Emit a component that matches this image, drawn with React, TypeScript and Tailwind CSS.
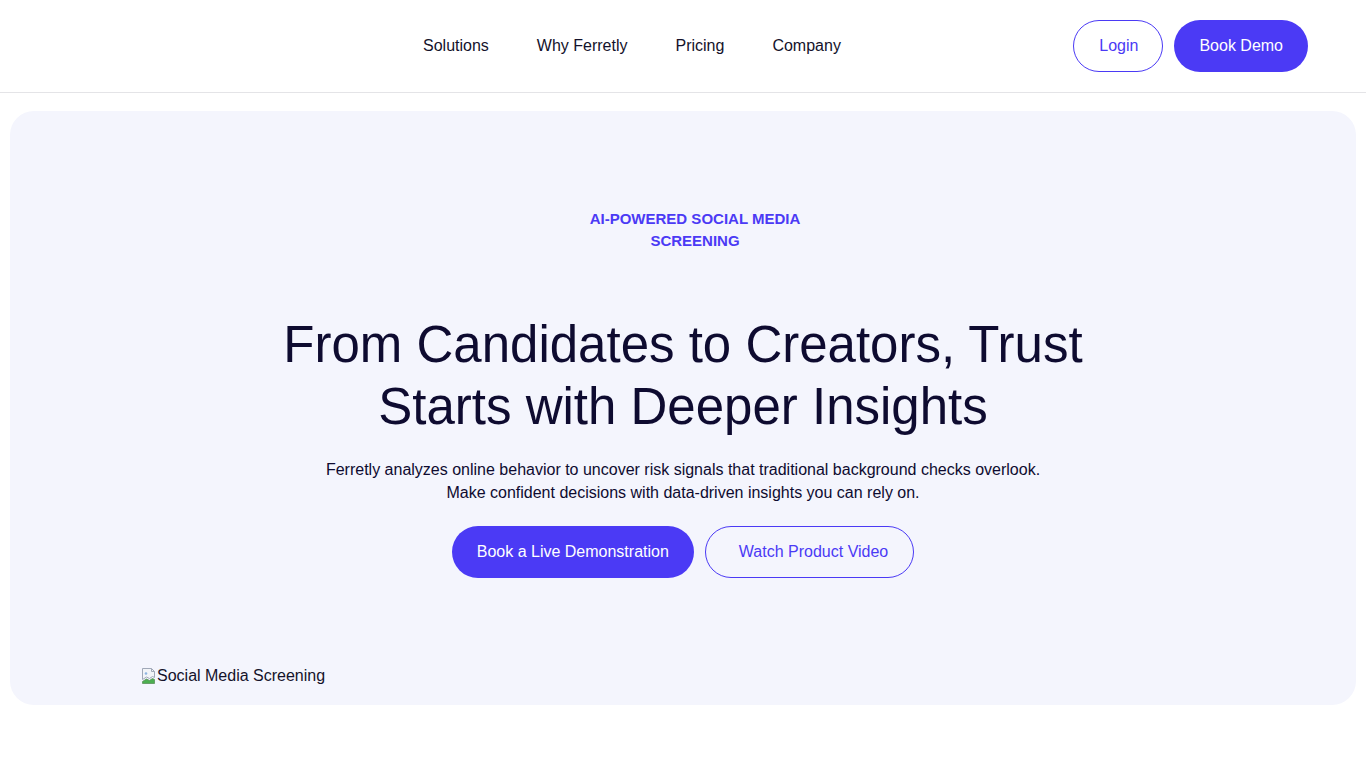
export default function App() {
  return (
    <div className="min-h-screen bg-white text-[#0e0b30]" style={{ fontFamily: '"Liberation Sans", Arial, sans-serif' }}>
      {/* Header */}
      <header className="h-[93px] border-b border-[#e4e4e7] flex items-center px-[58px]">
        <div className="w-[365px]" />
        <nav className="flex items-center gap-12 text-base text-[#14122b]">
          <a>Solutions</a>
          <a>Why Ferretly</a>
          <a>Pricing</a>
          <a>Company</a>
        </nav>
        <div className="ml-auto flex items-center gap-[11px]">
          <button className="h-[52px] pl-[25px] pr-6 rounded-full border border-[#4b3af5] text-[#4b3af5] text-base">Login</button>
          <button className="h-[52px] px-[25px] rounded-full bg-[#4b3af5] text-white text-base">Book Demo</button>
        </div>
      </header>

      {/* Hero */}
      <section className="px-[10px] pt-[18px]">
        <div className="rounded-[24px] bg-[#f4f5fd] pt-[97px] pb-[19px] flex flex-col items-center">
          <p className="ml-[24px] max-w-[240px] text-center text-[15px] font-bold leading-[22px] text-[#4b3af5]">
            AI-POWERED SOCIAL MEDIA SCREENING
          </p>
          <h1 className="mt-[62px] max-w-[860px] text-center text-[51px] leading-[62px] text-[#0e0b30]">
            From Candidates to Creators, Trust Starts with Deeper Insights
          </h1>
          <p className="mt-[20px] text-center text-base leading-[23px] text-[#0e0b30]">
            Ferretly analyzes online behavior to uncover risk signals that traditional background checks overlook.
            <br />
            Make confident decisions with data-driven insights you can rely on.
          </p>
          <div className="mt-[22px] flex items-center gap-[11px]">
            <button className="h-[52px] px-[25px] rounded-full bg-[#4b3af5] text-white text-base">
              Book a Live Demonstration
            </button>
            <button className="h-[52px] pl-[33px] pr-[25px] rounded-full border border-[#4b3af5] text-[#4b3af5] text-base">
              Watch Product Video
            </button>
          </div>
          <div className="mt-[88px] self-start ml-[131px] flex items-center h-[20px] text-base text-[#14122b]">
            <svg width="16" height="18" viewBox="0 0 16 18">
              <path d="M1.5 1.5h9l3 3v6l-2-1-3 2-3-1.5-4 2.5z" fill="#f2f4f8" stroke="#a0a8b8" strokeWidth="1" />
              <path d="M10.5 1.5v3h3" fill="none" stroke="#a0a8b8" strokeWidth="1" />
              <path d="M1.5 14.5l4-2.5 3 1.5 3-2 2 1v4h-12z" fill="#4caf50" stroke="#5a8f5a" strokeWidth="0.8" />
              <circle cx="5" cy="6.5" r="1.3" fill="#8fb4e0" />
            </svg>
            <span>Social Media Screening</span>
          </div>
        </div>
      </section>
    </div>
  )
}
